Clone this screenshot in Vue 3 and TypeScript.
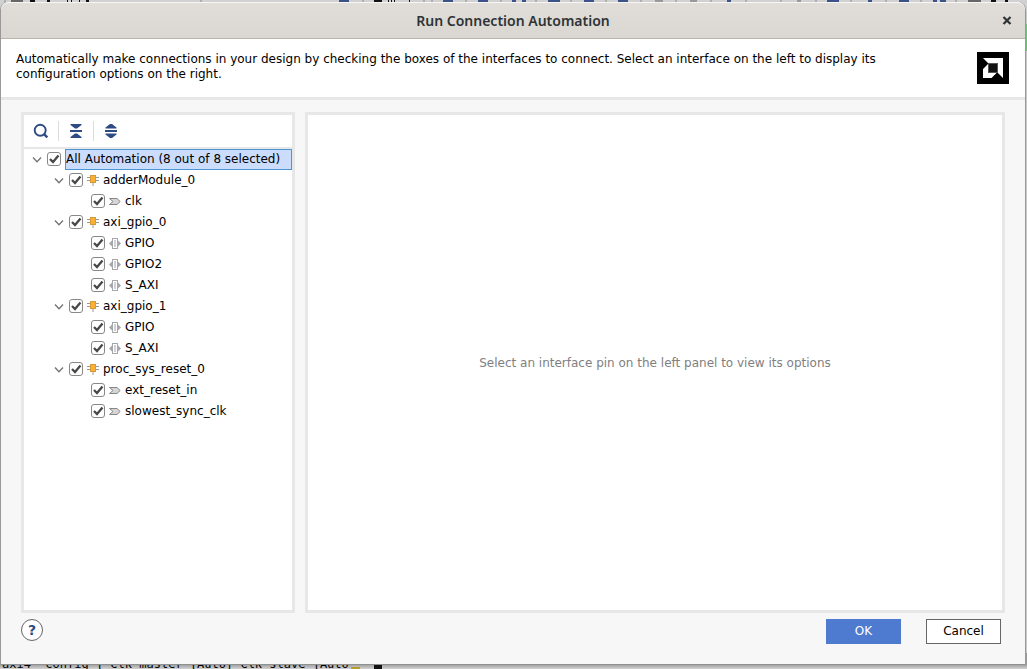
<script setup lang="ts">
import { ref, computed } from 'vue'

type Kind = 'root' | 'cell' | 'pin' | 'bus'

interface Row {
  id: string
  label: string
  level: number
  kind: Kind
  parent?: string
}

const rows: Row[] = [
  { id: 'all', label: 'All Automation (8 out of 8 selected)', level: 0, kind: 'root' },
  { id: 'adder', label: 'adderModule_0', level: 1, kind: 'cell', parent: 'all' },
  { id: 'adder-clk', label: 'clk', level: 2, kind: 'pin', parent: 'adder' },
  { id: 'gpio0', label: 'axi_gpio_0', level: 1, kind: 'cell', parent: 'all' },
  { id: 'gpio0-gpio', label: 'GPIO', level: 2, kind: 'bus', parent: 'gpio0' },
  { id: 'gpio0-gpio2', label: 'GPIO2', level: 2, kind: 'bus', parent: 'gpio0' },
  { id: 'gpio0-axi', label: 'S_AXI', level: 2, kind: 'bus', parent: 'gpio0' },
  { id: 'gpio1', label: 'axi_gpio_1', level: 1, kind: 'cell', parent: 'all' },
  { id: 'gpio1-gpio', label: 'GPIO', level: 2, kind: 'bus', parent: 'gpio1' },
  { id: 'gpio1-axi', label: 'S_AXI', level: 2, kind: 'bus', parent: 'gpio1' },
  { id: 'reset', label: 'proc_sys_reset_0', level: 1, kind: 'cell', parent: 'all' },
  { id: 'reset-ext', label: 'ext_reset_in', level: 2, kind: 'pin', parent: 'reset' },
  { id: 'reset-clk', label: 'slowest_sync_clk', level: 2, kind: 'pin', parent: 'reset' },
]

const checked = ref<string[]>(rows.map((r) => r.id))
const collapsed = ref<string[]>([])
const selected = ref('all')

const visibleRows = computed(() =>
  rows.filter((r) => {
    let p = r.parent
    while (p) {
      if (collapsed.value.includes(p)) return false
      p = rows.find((x) => x.id === p)?.parent
    }
    return true
  }),
)

function toggle(id: string) {
  collapsed.value = collapsed.value.includes(id)
    ? collapsed.value.filter((x) => x !== id)
    : [...collapsed.value, id]
}
</script>

<template>
  <div class="desktop">
    <div class="behind behind-top" aria-hidden="true">
      <svg width="1027" height="3" viewBox="0 0 1027 3">
        <path d="M5 0v3M201 0v3M363 0v3M424 0v3M432 0v3M466 0v3M501 0v3M536 0v3M571 0v3M606 0v3M641 0v3M676 0v3M711 0v3M746 0v3M781 0v3M816 0v3M851 0v3M886 0v3M921 0v3M956 0v3" stroke="#8b8c8a" />
        <path d="M11 1h12M968 1h13" stroke="#666" stroke-width="2" />
        <path d="M30 1h5M47 1h3M67 1h1M71 1h1M79 1h1M86 1h3M374 1h8M388 1h1M391 1h1M394 1h1M409 1h1M991 1h5M1005 1h3" stroke="#111" stroke-width="2" />
        <path d="M339 1h10M443 1h10M478 1h10M512 1h4M522 1h4M548 1h12M584 1h10M618 1h10M727 1h4M827 1h12M868 1h4M899 1h10M933 1h4M940 1h6" stroke="#3b5389" stroke-width="2" />
        <path d="M655 1h8M690 1h7M797 1h4" stroke="#999" stroke-width="2" />
      </svg>
    </div>
    <div class="behind behind-bottom" aria-hidden="true">
      <span class="console">axi4 -config { Clk_master {Auto} Clk_slave {Auto</span>
      <i class="marker"></i><i class="block"></i>
    </div>
    <div class="behind behind-right" aria-hidden="true"></div>

    <main class="dialog" role="dialog" aria-labelledby="dialog-title">
      <header class="titlebar">
        <h1 id="dialog-title">Run Connection Automation</h1>
        <button class="close" type="button" aria-label="Close">
          <svg width="10" height="10" viewBox="0 0 10 10">
            <path d="M1.500 1L8.500 8M8.500 1L1.500 8" stroke="#2e3436" stroke-width="2.200" />
          </svg>
        </button>
      </header>

      <section class="intro">
        <p>Automatically make connections in your design by checking the boxes of the interfaces to connect. Select an interface on the left to display its configuration options on the right.</p>
        <svg class="logo" width="32" height="32" viewBox="0 0 32 32" role="img" aria-label="AMD">
          <rect width="32" height="32" fill="#000" />
          <path d="M6 6H26V26L20.500 20.500V11.500H11.500Z" fill="#fff" />
          <path d="M11 12V20.500H20L14.500 26H6V17Z" fill="#fff" />
          <rect x="11.500" y="11.500" width="9" height="9" fill="#111" stroke="#555" />
        </svg>
      </section>

      <div class="panels">
        <section class="panel tree-panel">
          <div class="toolbar">
            <button type="button" aria-label="Search">
              <svg width="16" height="16" viewBox="0 0 16 16">
                <circle cx="7.200" cy="7.200" r="5.500" fill="none" stroke="#2f4b84" stroke-width="1.900" />
                <path d="M10.800 10.800L14.300 14.300" stroke="#2f4b84" stroke-width="2.400" />
              </svg>
            </button>
            <button type="button" aria-label="Collapse all">
              <svg width="16" height="16" viewBox="0 0 16 16" fill="#2f4b84">
                <path d="M2.500 1h11v1L9 5.500H7L2.500 2zM2 7h12v2H2zM7 10.500h2l4.500 3.500v1h-11v-1z" />
              </svg>
            </button>
            <button type="button" aria-label="Expand all">
              <svg width="16" height="16" viewBox="0 0 16 16" fill="#2f4b84">
                <path d="M7 1h2l4.500 3.500v1h-11v-1zM2 7h12v2H2zM2.500 10.500h11v1L9 15H7l-4.500-3.500z" />
              </svg>
            </button>
          </div>
          <ul class="tree">
            <li v-for="row in visibleRows" :key="row.id" class="row" :class="'level-' + row.level">
              <button v-if="row.level < 2" class="twisty" type="button" :aria-label="'Toggle ' + row.label" :aria-expanded="!collapsed.includes(row.id)" @click="toggle(row.id)">
                <svg width="10" height="8" viewBox="0 0 10 8" :class="{ closed: collapsed.includes(row.id) }">
                  <path d="M1 1.500L5 5.800L9 1.500" fill="none" stroke="#737373" stroke-width="1.300" />
                </svg>
              </button>
              <input :id="row.id" v-model="checked" type="checkbox" :value="row.id" />
              <svg v-if="row.kind === 'cell'" class="kind" width="12" height="13" viewBox="0 0 12 13">
                <path d="M0 3.500H12M0 6.500H12M6 9V12" stroke="#999" />
                <rect x="3.500" y="1.500" width="5" height="7" fill="#fbb034" stroke="#d79a37" />
              </svg>
              <svg v-else-if="row.kind === 'pin'" class="kind" width="12" height="13" viewBox="0 0 12 13">
                <path d="M0.500 3.500H8L11.200 6.500L8 9.500H0.500L4 6.500Z" fill="#d6d6d6" stroke="#888" />
              </svg>
              <svg v-else-if="row.kind === 'bus'" class="kind" width="12" height="13" viewBox="0 0 12 13">
                <path d="M3 3.500L0 6.500L3 9.500ZM9 3.500L12 6.500L9 9.500Z" fill="#a5a7aa" />
                <rect x="3.500" y="1.500" width="5" height="10" fill="#fff" stroke="#a5a7aa" />
                <rect x="5" y="3" width="2" height="7" fill="#ced2d6" />
              </svg>
              <label :for="row.id" :class="{ selected: selected === row.id }">{{ row.label }}</label>
            </li>
          </ul>
        </section>

        <section class="panel options">
          <p>Select an interface pin on the left panel to view its options</p>
        </section>
      </div>

      <footer class="actions">
        <button class="help" type="button" aria-label="Help">?</button>
        <button class="btn primary" type="button">OK</button>
        <button class="btn" type="button">Cancel</button>
      </footer>
    </main>
  </div>
</template>

<style>
body {
  margin: 0;
}
</style>

<style scoped>
* {
  box-sizing: border-box;
}

.desktop {
  position: relative;
  display: flex;
  min-height: 100vh;
  padding: 2px 1px 4px;
  overflow: hidden;
  background: #c9c9c9;
  font: 12px/15px "DejaVu Sans", sans-serif;
  color: #000;
}

button {
  padding: 0;
  border: 0;
  background: none;
  font: inherit;
  color: inherit;
}

svg {
  display: block;
  flex: none;
}

.behind {
  position: absolute;
  overflow: hidden;
}

.behind-top {
  top: 0;
  left: 0;
  right: 0;
  height: 12px;
  background: #d0d1d0;
}

.behind-bottom {
  left: 0;
  right: 0;
  bottom: 0;
  height: 16px;
  background: linear-gradient(#999 0 11px, #d2d2d2 16px);
}

.console {
  position: absolute;
  left: 2px;
  bottom: -2px;
  font: 12px/14px "DejaVu Sans Mono", monospace;
  white-space: pre;
}

.marker,
.block {
  position: absolute;
  bottom: 0;
}

.marker {
  left: 351px;
  width: 9px;
  height: 2px;
  background: #b5a023;
}

.block {
  left: 374px;
  width: 8px;
  height: 5px;
  background: #111;
}

.behind-right {
  top: 24px;
  right: 0;
  width: 2px;
  height: 27px;
  background: #72c178;
}

.dialog {
  position: relative;
  display: flex;
  flex: 1;
  flex-direction: column;
  margin-right: 1px;
  border-bottom: 1px solid #909090;
  border-radius: 8px 8px 0 0;
  background: #f7f7f7;
  box-shadow: -1px 0 #999, 1px 0 #999;
}

.titlebar {
  display: flex;
  align-items: center;
  height: 37px;
  padding: 0 12px 0 24px;
  border-top: 1px solid #f8f7f6;
  border-bottom: 1px solid #bcb5ac;
  border-radius: 8px 8px 0 0;
  background: linear-gradient(#e1deda, #dad6d1);
}

.titlebar h1 {
  flex: 1;
  margin: 0;
  font: 600 14px/20px "Noto Sans", sans-serif;
  color: #2e3436;
  text-align: center;
}

.close {
  display: grid;
  place-items: center;
  width: 12px;
  height: 24px;
}

.intro {
  display: flex;
  justify-content: space-between;
  gap: 40px;
  height: 61px;
  padding: 13px 16px 0 15px;
  border-bottom: 3px solid #e7e7e7;
  background: #fff;
}

.intro p {
  margin: 0;
}

.panels {
  display: flex;
  flex: 1;
  gap: 10px;
  padding: 12px 20px 0;
}

.panel {
  border: 3px solid #e7e7e7;
  background: #fff;
}

.tree-panel {
  flex: none;
  width: 274px;
}

.toolbar {
  display: flex;
  height: 34px;
  padding: 6px 0;
  border-bottom: 2px solid #e7e7e7;
}

.toolbar button {
  display: grid;
  place-items: center;
  width: 35px;
}

.toolbar button:first-child {
  width: 34px;
}

.toolbar button + button {
  border-left: 1px solid #dcdcdc;
}

.tree {
  margin: 0;
  padding: 0;
  list-style: none;
}

.row {
  display: flex;
  align-items: center;
  height: 21px;
}

.level-0 {
  padding-left: 8px;
}

.level-1 {
  padding-left: 30px;
}

.level-2 {
  padding-left: 67px;
}

.twisty {
  width: 15px;
}

.closed {
  transform: rotate(-90deg);
}

input {
  appearance: none;
  flex: none;
  width: 14px;
  height: 14px;
  margin: 0 0 1px;
  border: 1px solid #888;
  border-radius: 3px;
  background: #fff;
}

input:checked {
  background: url("data:image/svg+xml,%3Csvg xmlns='http://www.w3.org/2000/svg' viewBox='0 0 12 12'%3E%3Cpath d='M2 6l3 3 5.500-6.500' fill='none' stroke='%23484848' stroke-width='2.300'/%3E%3C/svg%3E") center / 12px 12px no-repeat;
}

.kind {
  margin-left: 4px;
}

.row label {
  margin-left: 4px;
  line-height: 19px;
  white-space: nowrap;
}

.level-0 label {
  flex: 1;
  border: 1px solid transparent;
}

.level-0 label.selected {
  border-color: #4b97d2;
  background: #cbdcfd;
}

.options {
  display: grid;
  flex: 1;
  place-items: center;
  padding-top: 2px;
}

.options p {
  margin: 0;
  color: #808080;
}

.actions {
  display: flex;
  align-items: flex-start;
  height: 51px;
  padding: 6px 24px 0 20px;
}

.help {
  width: 22px;
  height: 22px;
  margin-right: auto;
  border: 1px solid #666;
  border-radius: 50%;
  background: #fff;
  font-size: 14px;
  font-weight: bold;
  line-height: 20px;
  color: #2f4b84;
}

.btn {
  width: 75px;
  height: 25px;
  border: 1px solid #666;
  background: #fff;
}

.btn + .btn {
  margin-left: 25px;
}

.primary {
  border-color: #4e7bd0;
  background: #4e7bd0;
  color: #fff;
}
</style>
